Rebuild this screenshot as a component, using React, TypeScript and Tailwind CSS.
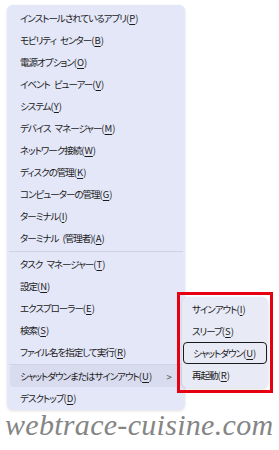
import React from "react";

type Item = { label: string; key: string; arrow?: boolean; active?: boolean };

const groups: Item[][] = [
  [
    { label: "インストールされているアプリ", key: "P" },
    { label: "モビリティ センター", key: "B" },
    { label: "電源オプション", key: "O" },
    { label: "イベント ビューアー", key: "V" },
    { label: "システム", key: "Y" },
    { label: "デバイス マネージャー", key: "M" },
    { label: "ネットワーク接続", key: "W" },
    { label: "ディスクの管理", key: "K" },
    { label: "コンピューターの管理", key: "G" },
    { label: "ターミナル", key: "I" },
    { label: "ターミナル (管理者)", key: "A" },
  ],
  [
    { label: "タスク マネージャー", key: "T" },
    { label: "設定", key: "N" },
    { label: "エクスプローラー", key: "E" },
    { label: "検索", key: "S" },
    { label: "ファイル名を指定して実行", key: "R" },
  ],
  [
    { label: "シャットダウンまたはサインアウト", key: "U", arrow: true, active: true },
    { label: "デスクトップ", key: "D" },
  ],
];

const sub: Item[] = [
  { label: "サインアウト", key: "I" },
  { label: "スリープ", key: "S" },
  { label: "シャットダウン", key: "U", active: true },
  { label: "再起動", key: "R" },
];

const Label = ({ item }: { item: Item }) => (
  <span className="whitespace-nowrap">
    <span className="tracking-[-1px] [word-spacing:3px]">{item.label}</span>
    <span className="tracking-[0px]">
      (<span className="underline underline-offset-2">{item.key}</span>)
    </span>
  </span>
);

export default function App() {
  return (
    <div className="relative w-[279px] h-[450px] bg-white overflow-hidden text-[#1b1b1b] [font-family:'Noto_Sans_CJK_JP',sans-serif] [font-feature-settings:'palt'] text-[9.5px]">
      {/* main menu */}
      <div className="ml-[7px] mt-[5px] w-[178px] rounded-md bg-[#e4e7f8] shadow-[0_1px_3px_rgba(0,0,0,0.12)] pt-[2px] pb-[1px]">
        {groups.map((g, gi) => (
          <div key={gi}>
            {gi === 1 && <div className="mx-[2px] my-[1.5px] h-px bg-[#cfd2e2]" />}
            {gi === 2 && <div className="mx-[2px] my-[0.5px] h-px bg-[#cfd2e2]" />}
            {g.map((item) => (
              <div
                key={item.key + item.label}
                className={
                  "mx-[3px] h-[22px] flex items-center justify-between pl-[10px] pr-[10px] rounded " +
                  (item.active ? "bg-[#d9dcef]" : "")
                }
              >
                <Label item={item} />
                {item.arrow && <span className="text-[#555] text-[10px]">&gt;</span>}
              </div>
            ))}
          </div>
        ))}
      </div>

      {/* submenu flyout with red highlight */}
      <div className="absolute left-[177px] top-[292px] w-[96px] h-[101px] border-[3px] border-[#e60012] p-[2px]">
        <div className="h-full rounded-md bg-[#e8eaf6] shadow-[0_1px_3px_rgba(0,0,0,0.15)] px-[1px] pt-[1px]">
          {sub.map((item) => (
            <div
              key={item.key}
              className={
                "h-[22px] flex items-center pl-[9px] rounded " +
                (item.active ? "border-[1.5px] border-[#1b1b1b] pl-[8px]" : "")
              }
            >
              <Label item={item} />
            </div>
          ))}
        </div>
      </div>

      {/* watermark */}
      <div className="absolute left-[5px] top-[410px] text-[30px] leading-none italic text-[#858585] tracking-[0.3px] [font-family:'Liberation_Serif',serif] [font-feature-settings:normal] whitespace-nowrap">
        webtrace-cuisine.com
      </div>
    </div>
  );
}
